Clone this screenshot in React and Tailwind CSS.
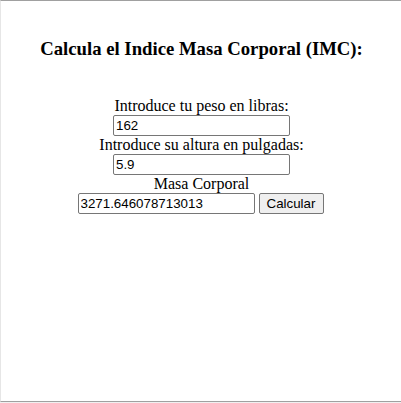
import { useState } from "react";

const serif = { fontFamily: '"Liberation Serif", "Times New Roman", serif' };

const App = () => {
  const [peso, setPeso] = useState("162");
  const [altura, setAltura] = useState("5.9");
  const [masa, setMasa] = useState("3271.646078713013");

  const calcular = () => {
    const p = parseFloat(peso);
    const a = parseFloat(altura);
    if (!isNaN(p) && !isNaN(a) && a !== 0) setMasa(String((p / (a * a)) * 703));
  };

  const inputCls =
    "w-[177px] h-[21px] border border-[#767676] rounded-[2px] px-[2px] text-[13.33px] text-black bg-white outline-none font-['Liberation_Sans',Arial,sans-serif]";

  return (
    <div className="w-[401px] h-[403px] bg-[#f0f0f0] flex flex-col">
      <div
        className="h-[402px] bg-white border-t border-t-[#a0a0a0] border-l border-l-[#e6e6e6] border-b border-b-[#a0a0a0] flex flex-col items-center text-black pl-[1px]"
        style={serif}
      >
        <h3 className="mt-[37px] text-[18.72px] font-bold leading-[22px]">
          Calcula el Indice Masa Corporal (IMC):
        </h3>
        <div className="mt-[37px] flex flex-col items-center text-[16px]">
          <label className="leading-[18px]">Introduce tu peso en libras:</label>
          <input
            className={inputCls}
            value={peso}
            onChange={(e) => setPeso(e.target.value)}
          />
          <label className="leading-[18px]">Introduce su altura en pulgadas:</label>
          <input
            className={inputCls}
            value={altura}
            onChange={(e) => setAltura(e.target.value)}
          />
          <label className="leading-[18px]">Masa Corporal</label>
          <div className="flex items-center gap-[4px] pr-[2px]">
            <input
              className={inputCls}
              value={masa}
              onChange={(e) => setMasa(e.target.value)}
            />
            <button
              onClick={calcular}
              className="w-[65px] h-[21px] border border-[#767676] rounded-[2px] bg-[#efefef] text-[13.33px] text-black font-['Liberation_Sans',Arial,sans-serif]"
            >
              Calcular
            </button>
          </div>
        </div>
      </div>
    </div>
  );
};

export default App;
